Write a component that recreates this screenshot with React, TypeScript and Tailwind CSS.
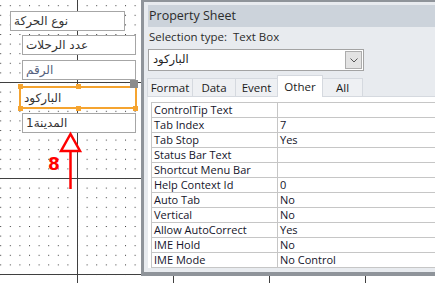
import React from "react";

const ui = { fontFamily: '"Open Sans", "Noto Sans", sans-serif' };
const ar = { fontFamily: '"DejaVu Sans", "Noto Sans", sans-serif' };

const rows: [string, string][] = [
  ["ControlTip Text", ""],
  ["Tab Index", "7"],
  ["Tab Stop", "Yes"],
  ["Status Bar Text", ""],
  ["Shortcut Menu Bar", ""],
  ["Help Context Id", "0"],
  ["Auto Tab", "No"],
  ["Vertical", "No"],
  ["Allow AutoCorrect", "Yes"],
  ["IME Hold", "No"],
  ["IME Mode", "No Control"],
];

const fields = [
  { label: "نوع الحركة", cls: "left-[10px] top-[11px] w-[115px]" },
  { label: "عدد الرحلات", cls: "left-[22px] top-[35px] w-[114px]" },
  { label: "الرقم", cls: "left-[22px] top-[60px] w-[114px] text-[#55627e]" },
  { label: "المدينة1", cls: "left-[22px] top-[113px] w-[114px]" },
];

const tabs = [
  { t: "Format", w: "w-[46px]" },
  { t: "Data", w: "w-[44px]" },
  { t: "Event", w: "w-[43px]" },
];

function DesignGrid() {
  return (
    <svg className="absolute inset-0" width="435" height="283">
      <defs>
        <pattern id="dots" x="0.2" y="5.2" width="9.6" height="9.6" patternUnits="userSpaceOnUse">
          <rect x="0" y="0" width="1" height="1" fill="#3a3a3a" />
        </pattern>
      </defs>
      <rect width="435" height="283" fill="#fff" />
      <rect width="435" height="283" fill="url(#dots)" />
      {[82, 178, 274].map((y) => (
        <rect key={y} x="0" y={y} width="435" height="1" fill="#404040" />
      ))}
      {[77, 173, 269, 365].map((x) => (
        <rect key={x} x={x} y="0" width="1" height="283" fill="#404040" />
      ))}
    </svg>
  );
}

function Handle({ cls }: { cls: string }) {
  return <div className={`absolute h-[5px] w-[5px] bg-[#f5a430] ${cls}`} />;
}

function Annotations() {
  return (
    <svg className="pointer-events-none absolute inset-0" width="435" height="283">
      <g stroke="#ff0000" strokeWidth="2.5" fill="#fff" strokeLinejoin="miter">
        <line x1="70.5" y1="140" x2="70.5" y2="189" />
        <polygon points="70.5,134 61,151 80,151" />
        <line x1="318" y1="126.5" x2="369" y2="126.5" />
        <polygon points="306,126.5 326,117 326,136" />
      </g>
    </svg>
  );
}

export default function App() {
  return (
    <div className="relative h-[283px] w-[435px] overflow-hidden bg-white">
      <DesignGrid />

      {fields.map((f) => (
        <div
          key={f.label}
          className={`absolute flex h-[20px] items-center border border-[#a6a6a6] bg-white px-[3px] text-[12px] text-[#333] ${f.cls}`}
          style={ar}
        >
          <span dir="rtl">{f.label}</span>
        </div>
      ))}

      {/* selected control */}
      <div
        className="absolute left-[19px] top-[86px] flex h-[23px] w-[118px] items-center border-2 border-[#f5a430] bg-white px-[3px] text-[12px] text-[#333]"
        style={ar}
      >
        <span dir="rtl">الباركود</span>
      </div>
      <Handle cls="left-[76px] top-[84px]" />
      <Handle cls="left-[76px] top-[106px]" />
      <Handle cls="left-[18px] top-[106px]" />
      <Handle cls="left-[18px] top-[84px]" />
      <Handle cls="left-[133px] top-[106px]" />
      <div className="absolute left-[130px] top-[80px] h-[8px] w-[8px] bg-[#8c8c8c]" />

      <Annotations />
      <div
        className="absolute left-[48px] top-[156px] text-[17px] font-bold leading-none text-[#ff0000]"
        style={{ fontFamily: '"DejaVu Sans", sans-serif' }}
      >
        8
      </div>

      {/* property sheet window */}
      <div className="absolute left-[141px] top-0 h-[276px] w-[300px] bg-[#8f949a] pb-[4px] pl-[3px] pt-[2px]" style={ui}>
        <div className="flex h-full flex-col bg-[#e8ebef] pt-[3px]">
          <div className="ml-[4px] flex h-[22px] items-center bg-[#ccd3db] pl-[1px] text-[12.5px] text-[#2b2b2b]">
            Property Sheet
          </div>
          <div className="ml-[5px] flex h-[20px] items-center text-[11.5px] text-[#2b2b2b]">
            Selection type:&nbsp;&nbsp;Text Box
          </div>
          <div className="ml-[4px] mt-[2px] flex h-[22px] w-[216px] items-center justify-between border border-[#a3a3a3] bg-white pl-[4px] pr-[1px]">
            <span dir="rtl" className="text-[11.5px] text-[#222]" style={ar}>
              الباركود
            </span>
            <div className="flex h-[18px] w-[17px] items-center justify-center border border-[#adadad] bg-[#e3e3e3]">
              <svg width="8" height="5" viewBox="0 0 8 5">
                <path d="M0.5 0.5 L4 4 L7.5 0.5" fill="none" stroke="#555" strokeWidth="1" />
              </svg>
            </div>
          </div>
          <div className="ml-[3px] mt-[5px] flex h-[21px] items-end text-[11.5px] text-[#1b1b1b]">
            {tabs.map(({ t, w }) => (
              <div
                key={t}
                className={`-mr-px flex h-[19px] items-center justify-center border border-b-0 border-[#d5d9df] bg-[#eef0f3] leading-none ${w}`}
              >
                {t}
              </div>
            ))}
            <div className="relative z-10 -mr-px flex h-[22px] w-[46px] items-center justify-center border border-b-0 border-[#d5d9df] bg-white leading-none">
              Other
            </div>
            <div className="flex h-[19px] w-[41px] items-center justify-center border border-b-0 border-[#d5d9df] bg-[#eef0f3] leading-none">
              All
            </div>
          </div>
          <div className="-mt-px ml-[4px] flex-1 border-t border-[#d5d9df] bg-white pl-[3px] pt-[5px]">
            <div className="border-l border-t border-[#c6c6c6] text-[11px] text-[#14142a]">
              {rows.map(([k, v]) => (
                <div key={k} className="flex h-[15px] border-b border-[#c6c6c6] leading-[14px]">
                  <div className="w-[126px] overflow-hidden whitespace-nowrap border-r border-[#c6c6c6] pl-[2px]">
                    {k}
                  </div>
                  <div className="pl-[2px]">{v}</div>
                </div>
              ))}
            </div>
          </div>
          <div className="h-[4px]" />
        </div>
      </div>
    </div>
  );
}
